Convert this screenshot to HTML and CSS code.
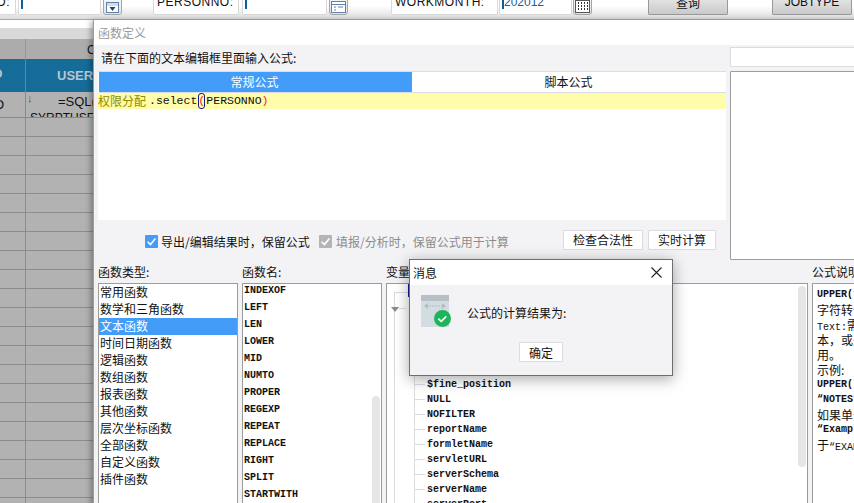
FILE: index.html
```html
<!DOCTYPE html>
<html lang="zh">
<head>
<meta charset="utf-8">
<title>函数定义</title>
<link rel="stylesheet" href="styles.css">
</head>
<body>
<div class="page">
  <header class="toolbar">
    <div class="tb-label tb-label-end w-16"><span>NO:</span></div>
    <div class="tb-input w-83 ml-2"><i class="caret"></i></div>
    <button class="tb-icon ml-2"><svg width="13" height="11" viewBox="0 0 13 11"><rect x=".5" y=".5" width="12" height="10" fill="#fff" stroke="#5f82ad"/><rect x="1" y="1" width="11" height="3" fill="#cfdcec"/><path d="M3.5 5h6L6.5 9z" fill="#23406e"/></svg></button>
    <div class="tb-label w-86 ml-31"><span>PERSONNO:</span></div>
    <div class="tb-input w-85 ml-3"><i class="caret"></i></div>
    <button class="tb-icon ml-2"><svg width="15" height="12" viewBox="0 0 15 12"><rect x=".5" y=".5" width="14" height="11" fill="#fff" stroke="#5f82ad"/><path d="M1 3.5h13" stroke="#5f82ad"/><path d="M3 6h2M3 9h2M7 6h5" stroke="#5f82ad"/></svg></button>
    <div class="tb-label w-107 ml-43"><span>WORKMONTH:</span></div>
    <div class="tb-input w-73 ml-1 tb-date"><i class="caret"></i>202012</div>
    <button class="tb-icon ml-1"><svg width="15" height="13" viewBox="0 0 15 13"><rect x=".5" y=".5" width="14" height="12" fill="#fff" stroke="#555"/><path d="M3 3h1M6 3h1M9 3h1M12 3h1M3 6h1M6 6h1M9 6h1M12 6h1M3 9h1M6 9h1M9 9h1M12 9h1" stroke="#333" stroke-width="2"/></svg></button>
    <button class="tb-btn ml-56">查询</button>
    <button class="tb-btn ml-44">JOBTYPE</button>
  </header>

  <section class="sheet">
    <div class="band"></div>
    <div class="row row-head"><div class="cell"></div><div class="cell cell-c">C</div></div>
    <div class="row row-blue"><div class="cell cell-o">O</div><div class="cell cell-user">USERNAME</div></div>
    <div class="row row-first">
      <div class="cell cell-val">O</div>
      <div class="cell cell-sql"><span class="mark">↓</span><div class="sql-1">=SQL("FR",</div><div class="sql-2">SYRPTUSER</div></div>
    </div>
    <div class="row"><div class="cell"></div><div class="cell"></div></div>
    <div class="row"><div class="cell"></div><div class="cell"></div></div>
    <div class="row"><div class="cell"></div><div class="cell"></div></div>
    <div class="row"><div class="cell"></div><div class="cell"></div></div>
    <div class="row"><div class="cell"></div><div class="cell"></div></div>
    <div class="row"><div class="cell"></div><div class="cell"></div></div>
    <div class="row"><div class="cell"></div><div class="cell"></div></div>
    <div class="row"><div class="cell"></div><div class="cell"></div></div>
    <div class="row"><div class="cell"></div><div class="cell"></div></div>
    <div class="row"><div class="cell"></div><div class="cell"></div></div>
    <div class="row"><div class="cell"></div><div class="cell"></div></div>
    <div class="row"><div class="cell"></div><div class="cell"></div></div>
    <div class="row"><div class="cell"></div><div class="cell"></div></div>
    <div class="row"><div class="cell"></div><div class="cell"></div></div>
    <div class="row"><div class="cell"></div><div class="cell"></div></div>
    <div class="row"><div class="cell"></div><div class="cell"></div></div>
    <div class="row"><div class="cell"></div><div class="cell"></div></div>
    <div class="row"><div class="cell"></div><div class="cell"></div></div>
    <div class="row"><div class="cell"></div><div class="cell"></div></div>
    <div class="row"><div class="cell"></div><div class="cell"></div></div>
    <div class="row"><div class="cell"></div><div class="cell"></div></div>
    <div class="row"><div class="cell"></div><div class="cell"></div></div>
  </section>

  <div class="func-dialog">
    <div class="func-title">函数定义</div>
    <div class="func-body">
      <div class="top-row">
        <div class="editor-col">
          <div class="prompt">请在下面的文本编辑框里面输入公式:</div>
          <div class="editor">
            <div class="tabs">
              <div class="tab tab-on">常规公式</div>
              <div class="tab">脚本公式</div>
            </div>
            <div class="code-line"><span class="c-cjk">权限分配</span><span class="c-mono">.select<span class="c-match">(</span>PERSONNO<span class="c-red">)</span></span></div>
          </div>
          <div class="actions">
            <span class="check check-on"><svg width="13" height="13" viewBox="0 0 13 13"><path d="M2.6 6.8l2.8 2.8 5-6" fill="none" stroke="#fff" stroke-width="1.6"/></svg></span>
            <span class="check-text">导出/编辑结果时，保留公式</span>
            <span class="check check-off"><svg width="13" height="13" viewBox="0 0 13 13"><path d="M2.6 6.8l2.8 2.8 5-6" fill="none" stroke="#fff" stroke-width="1.6"/></svg></span>
            <span class="check-text check-text-off">填报/分析时，保留公式用于计算</span>
            <button class="act-btn act-check">检查合法性</button>
            <button class="act-btn act-calc">实时计算</button>
          </div>
        </div>
        <div class="side-col">
          <div class="side-input"></div>
          <div class="side-panel"></div>
        </div>
      </div>

      <div class="lists">
        <div class="list-col">
          <div class="list-label">函数类型:</div>
          <ul class="list list-types">
            <li>常用函数</li>
            <li>数学和三角函数</li>
            <li class="is-selected">文本函数</li>
            <li>时间日期函数</li>
            <li>逻辑函数</li>
            <li>数组函数</li>
            <li>报表函数</li>
            <li>其他函数</li>
            <li>层次坐标函数</li>
            <li>全部函数</li>
            <li>自定义函数</li>
            <li>插件函数</li>
          </ul>
        </div>
        <div class="list-col">
          <div class="list-label">函数名:</div>
          <div class="list">
            <ul class="names">
              <li>INDEXOF</li><li>LEFT</li><li>LEN</li><li>LOWER</li><li>MID</li><li>NUMTO</li><li>PROPER</li><li>REGEXP</li><li>REPEAT</li><li>REPLACE</li><li>RIGHT</li><li>SPLIT</li><li>STARTWITH</li>
            </ul>
            <span class="scroll scroll-names"></span>
          </div>
        </div>
        <div class="list-col">
          <div class="list-label">变量</div>
          <div class="list list-tree">
            <span class="tree-v1"></span><span class="tree-h1"></span><span class="tree-node"></span>
            <span class="tree-tri"></span><span class="tree-h2"></span><span class="tree-v2"></span>
            <ul class="vars">
              <li>$fine_position</li><li>NULL</li><li>NOFILTER</li><li>reportName</li><li>formletName</li><li>servletURL</li><li>serverSchema</li><li>serverName</li><li>serverPort</li>
            </ul>
            <span class="scroll scroll-vars"></span>
          </div>
        </div>
        <div class="list-col">
          <div class="list-label">公式说明</div>
          <div class="list list-doc">
            <div class="m">UPPER(text):将文本中所有</div>
            <div>字符转化为大写。</div>
            <div><span class="m">Text:</span>需要转化为大写</div>
            <div>本，或是包含文本的</div>
            <div>用。</div>
            <div>示例:</div>
            <div class="m">UPPER("notes")</div>
            <div class="m">“NOTES”。</div>
            <div>如果单元格的值为</div>
            <div class="m">“Examples”</div>
            <div>于<span class="m">“EXAMPLES”</span></div>
          </div>
        </div>
      </div>
    </div>
  </div>

  <div class="msg-dialog">
    <div class="msg-title">
      <span>消息</span>
      <svg width="13" height="13" viewBox="0 0 13 13"><path d="M1.5 1.5l10 10M11.5 1.5l-10 10" stroke="#222" stroke-width="1.1"/></svg>
    </div>
    <div class="msg-body">
      <div class="msg-main">
        <svg class="msg-icon" width="31" height="33" viewBox="0 0 31 33">
          <rect x="0" y="0" width="28" height="32" fill="#d3dce0"/>
          <rect x="0" y="0" width="28" height="6" fill="#b5c1c7"/>
          <path d="M5 11h18" stroke="#b3bdc2" stroke-width="1.2" stroke-dasharray="2 1"/>
          <path d="M3 11l4-3v6zM25 11l-4-3v6z" fill="#b3bdc2"/>
          <circle cx="21.5" cy="23.5" r="8.5" fill="#1db45a"/>
          <path d="M17.3 23.6l3 2.8 5-5" fill="none" stroke="#fff" stroke-width="1.7"/>
        </svg>
        <span class="msg-text">公式的计算结果为:</span>
      </div>
      <div class="msg-foot"><button class="msg-btn">确定</button></div>
    </div>
  </div>
</div>
</body>
</html>
```
FILE: styles.css
```css
* { box-sizing: border-box; }
html, body { margin: 0; padding: 0; height: 100%; background: #fff; overflow: hidden; }
body { font-family: "Noto Sans CJK SC", "Liberation Sans", sans-serif; font-size: 12px; color: #111; }
ul { list-style: none; margin: 0; padding: 0; }
button { font: inherit; color: inherit; padding: 0; cursor: default; }

.page { position: relative; width: 854px; height: 503px; overflow: hidden; display: flex; flex-direction: column; }

/* toolbar */
.toolbar {
  height: 20px; flex: none; display: flex; align-items: flex-end; padding-bottom: 4px;
  background: linear-gradient(#fff 30%, #dcdcdc); border-bottom: 1px solid #a8a8a8; overflow: hidden;
}
.tb-label, .tb-input, .tb-icon, .tb-btn { height: 26px; flex: none; }
.tb-label {
  display: flex; justify-content: flex-start; align-items: center; overflow: hidden; padding-left: 3px;
  background: #fff; border: 1px solid #d8d8d8; border-radius: 2px;
  font-family: "Liberation Sans", sans-serif; font-size: 12px; letter-spacing: .5px; white-space: nowrap;
}
.tb-label-end { justify-content: flex-end; padding: 0 5px 0 0; }
.tb-input { background: #fff; border: 1px solid #d8d8d8; border-radius: 2px; display: flex; align-items: center; padding-left: 1px; }
.tb-date { font-family: "Liberation Sans", sans-serif; font-size: 12px; color: #1c5f99; }
.caret { display: block; width: 2px; height: 13px; background: #0f5f96; margin-left: 1px; }
.tb-icon {
  width: 19px; border: 1px solid #a6a6a6; border-radius: 3px; background: linear-gradient(#fff, #e4e4e4);
  display: flex; align-items: flex-end; justify-content: center; padding-bottom: 1px;
}
.tb-btn {
  width: 80px; border: 1px solid #999; background: linear-gradient(#f4f4f4, #c9c9c9); border-radius: 1px;
  font-family: "Liberation Sans", "Noto Sans CJK SC", sans-serif; font-size: 12px;
}
.w-16 { width: 16px; border-left: 0; } .w-83 { width: 83px; } .w-86 { width: 86px; } .w-85 { width: 85px; }
.w-107 { width: 107px; } .w-73 { width: 73px; }
.ml-1 { margin-left: 1px; } .ml-2 { margin-left: 2px; } .ml-3 { margin-left: 3px; } .ml-31 { margin-left: 31px; }
.ml-43 { margin-left: 43px; } .ml-44 { margin-left: 44px; } .ml-56 { margin-left: 56px; }

/* sheet behind the dialog */
.sheet { margin-top: 8px; flex: 1; overflow: hidden; background: #b2b2b2; font-family: "Liberation Sans", sans-serif; }
.band { height: 11px; background: #d9d9d9; }
.row { display: grid; grid-template-columns: 26px 1fr; height: 19px; border-bottom: 1px solid #8c8c8c; }
.cell { border-right: 1px solid #8c8c8c; overflow: hidden; white-space: nowrap; min-width: 0; }
.row-head { height: 20px; background: #acacac; border-bottom: 0; }
.row-head .cell { border-right-color: #969696; }
.cell-c { padding: 4px 0 0 61px; font-size: 12px; }
.row-blue { height: 33px; background: #156c99; border-bottom: 0; }
.row-blue .cell { border-right-color: #4c8eb3; }
.cell-o { color: #b5c8d4; font-size: 12px; font-weight: bold; padding: 8px 0 0 0; text-indent: -7px; }
.cell-user { color: #b9c6cf; font-size: 13px; font-weight: bold; padding: 9px 0 0 31px; }
.row-first { height: 26px; border-bottom-color: #6d90ab; }
.row-first .cell { border-right-color: #6d90ab; }
.cell-val { font-size: 13px; padding-top: 5px; text-indent: -6px; }
.cell-sql { position: relative; font-size: 13px; line-height: 15px; }
.mark { position: absolute; left: 1px; top: -1px; font-size: 11px; color: #555; }
.sql-1 { padding: 2px 0 0 32px; }
.sql-2 { padding: 2px 0 0 4px; font-size: 12px; }

/* function dialog */
.func-dialog {
  position: absolute; left: 93px; top: 19px; width: 775px; height: 490px;
  background: #f3f3f6; border: 1px solid #9c9c9c; border-right: 0; border-bottom: 0;
  box-shadow: -2px 2px 6px rgba(0, 0, 0, .35); display: flex; flex-direction: column;
}
.func-title { height: 25px; flex: none; background: #fff; color: #9a9a9a; padding: 5px 0 0 4px; line-height: 16px; }
.func-body { flex: 1; padding-left: 4px; display: flex; flex-direction: column; min-height: 0; }
.top-row { display: flex; gap: 4px; height: 215px; flex: none; }
.editor-col { width: 628px; flex: none; display: flex; flex-direction: column; }
.prompt { height: 26px; flex: none; padding: 5px 0 0 3px; line-height: 16px; }
.editor { height: 149px; flex: none; background: #fff; border-top: 1px solid #dcdce4; padding-left: 1px; }
.tabs { display: flex; height: 21px; border-bottom: 1px solid #dcdce4; }
.tab { width: 313px; text-align: center; line-height: 19px; height: 20px; }
.tab-on { background: #429cf8; color: #fff; padding-right: 2px; }
.code-line { margin-left: -1px; height: 16px; background: #fffcaa; line-height: 16px; display: flex; color: #111; }
.c-cjk { color: #8c8c00; }
.c-mono { font-family: "Liberation Mono", monospace; font-size: 11.5px; padding-left: 3px; }
.c-match { color: #e23; display: inline-block; outline: 1px solid #1a1a8c; outline-offset: -1px; border-radius: 3px; width: 7px; margin: 0 1px; }
.c-red { color: #e23; }
.actions { flex: 1; display: flex; align-items: center; padding: 0 0 0 47px; }
.check { width: 13px; height: 13px; flex: none; display: block; margin-top: 2px; border-radius: 1px; }
.check svg { display: block; }
.check-on { background: #429cf8; }
.check-off { background: #b4b4b4; margin-left: 14px; }
.check-text { margin-left: 3px; width: 144px; white-space: nowrap; margin-top: 2px; }
.check-text-off { color: #8c8c8c; width: 184px; margin-left: 4px; }
.act-btn { height: 20px; background: #fff; border: 1px solid #dcdce0; flex: none; border-radius: 1px; margin-top: -1px; }
.act-check { width: 80px; margin-left: 43px; }
.act-calc { width: 68px; margin-left: 5px; }
.side-col { flex: 1; display: flex; flex-direction: column; padding-top: 2px; gap: 4px; }
.side-input { height: 20px; background: #fff; border: 1px solid #dcdce0; }
.side-panel { height: 189px; background: #fff; border: 1px solid #9c9c9c; border-radius: 1px 0 0 1px; }

.lists { flex: 1; display: grid; grid-template-columns: 140px 140px 422px 60px; column-gap: 4px; min-height: 0; }
.list-col { display: flex; flex-direction: column; min-height: 0; min-width: 0; }
.list-label { height: 23px; flex: none; line-height: 16px; padding-top: 4px; white-space: nowrap; }
.list { position: relative; flex: 1; background: #fff; border: 1px solid #9c9c9c; overflow: hidden; }
.list-types li { height: 17px; line-height: 15px; padding-left: 1px; }
.list-types .is-selected { background: #429cf8; color: #fff; }
.names { margin-top: -2px; font-family: "Liberation Mono", monospace; font-size: 10px; font-weight: bold; }
.names li { height: 17px; line-height: 17px; padding-left: 1px; }
.scroll { position: absolute; width: 8px; background: #e6e6e6; border-radius: 4px; }
.scroll-names { right: 1px; top: 112px; bottom: 0; }
.scroll-vars { right: 1px; top: 2px; height: 181px; }

.vars { padding-top: 93px; font-family: "Liberation Mono", monospace; font-size: 10px; font-weight: bold; }
.vars li { position: relative; height: 15px; line-height: 15px; padding-left: 40px; white-space: nowrap; }
.vars li::before { content: ""; position: absolute; left: 28px; top: 7px; width: 10px; height: 1px; background: #dcdce0; }
.tree-v1 { position: absolute; left: 7px; top: 8px; bottom: 0; width: 1px; background: #dcdce0; }
.tree-h1 { position: absolute; left: 7px; top: 8px; width: 14px; height: 1px; background: #dcdce0; }
.tree-node { position: absolute; left: 21px; top: 0; width: 60px; height: 13px; border: 1px solid #1a1a8c; background: #fff; }
.tree-tri { position: absolute; left: 4px; top: 23px; border: 4px solid transparent; border-top: 5px solid #8c8c8c; border-bottom: 0; }
.tree-h2 { position: absolute; left: 12px; top: 24px; width: 7px; height: 1px; background: #dcdce0; }
.tree-v2 { position: absolute; left: 27px; top: 24px; bottom: 0; width: 1px; background: #dcdce0; }

.list-doc { padding: 3px 0 0 4px; white-space: nowrap; }
.list-doc div { height: 15px; line-height: 15px; }
.m { font-family: "Liberation Mono", "Noto Sans CJK SC", monospace; font-size: 10px; }
.list-doc div.m { font-weight: bold; }

/* message dialog */
.msg-dialog {
  position: absolute; left: 409px; top: 259px; width: 264px; height: 117px;
  background: #f3f3f6; border: 1px solid #6e6e6e; box-shadow: 0 3px 14px rgba(0, 0, 0, .35);
  display: flex; flex-direction: column;
}
.msg-title { height: 25px; flex: none; background: #fff; display: flex; justify-content: space-between; align-items: center; padding: 0 9px 0 3px; }
.msg-body { flex: 1; display: flex; flex-direction: column; }
.msg-main { height: 57px; padding: 10px 0 0 11px; display: flex; align-items: flex-start; flex: none; }
.msg-icon { flex: none; }
.msg-text { margin-left: 15px; margin-top: 9px; line-height: 17px; white-space: nowrap; }
.msg-foot { display: flex; justify-content: center; }
.msg-btn { width: 44px; height: 20px; background: #fff; border: 1px solid #dcdce0; border-radius: 1px; }
```
